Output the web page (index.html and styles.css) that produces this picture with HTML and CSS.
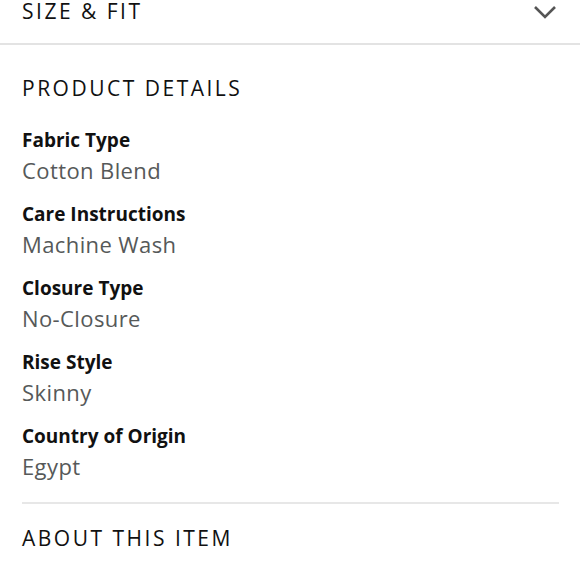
FILE: index.html
```html
<!DOCTYPE html>
<html>
<head>
<meta charset="utf-8">
<link rel="stylesheet" href="styles.css">
</head>
<body>
<div class="page">
  <div class="collapsed">
    <span class="section-title">SIZE &amp; FIT</span>
    <svg class="chevron" width="24" height="16" viewBox="0 0 24 16"><path d="M2 3 L12 13 L22 3" fill="none" stroke="#555" stroke-width="2.6"/></svg>
  </div>
  <div class="details">
    <div class="details-inner">
      <h2 class="section-title heading">PRODUCT DETAILS</h2>
      <dl class="attrs">
        <div class="attr"><dt>Fabric Type</dt><dd>Cotton Blend</dd></div>
        <div class="attr"><dt>Care Instructions</dt><dd>Machine Wash</dd></div>
        <div class="attr"><dt>Closure Type</dt><dd>No-Closure</dd></div>
        <div class="attr"><dt>Rise Style</dt><dd>Skinny</dd></div>
        <div class="attr"><dt>Country of Origin</dt><dd>Egypt</dd></div>
      </dl>
    </div>
    <h2 class="section-title heading about">ABOUT THIS ITEM</h2>
    <p class="bullet">Stretchy skinny fit jeans</p>
  </div>
</div>
</body>
</html>
```
FILE: styles.css
```css
html, body {
  margin: 0;
  padding: 0;
  background: #fff;
  overflow: hidden;
}
body {
  font-family: "Open Sans", "Noto Sans", sans-serif;
  color: #111;
}
.page {
  margin-top: -20px;
}
.collapsed {
  height: 65px;
  padding: 0 22px 2px;
  border-bottom: 2px solid #e3e3e3;
  display: flex;
  align-items: center;
  justify-content: space-between;
  box-sizing: border-box;
}
.section-title {
  font-size: 21px;
  letter-spacing: 2.5px;
  font-weight: 400;
  color: #111;
}
.chevron {
  display: block;
  margin-right: 1px;
  margin-top: 3px;
}
.details {
  padding: 0 21px 0 22px;
}
.details-inner {
  border-bottom: 2px solid #e7e7e7;
  padding-bottom: 21px;
}
.heading {
  margin: 0;
  line-height: 30px;
  padding-top: 28px;
  padding-bottom: 24px;
}
.heading.about {
  padding-top: 19px;
}
.attrs {
  margin: 0;
  display: flex;
  flex-direction: column;
  gap: 16px;
}
.attr dt {
  font-size: 19px;
  font-weight: 700;
  line-height: 26px;
  color: #111;
}
.attr dd {
  margin: 0;
  padding-top: 2px;
  font-size: 22px;
  letter-spacing: 0.4px;
  line-height: 30px;
  color: #565959;
}
.bullet {
  margin: 0;
  font-size: 21px;
  line-height: 30px;
  color: #333;
}
```
